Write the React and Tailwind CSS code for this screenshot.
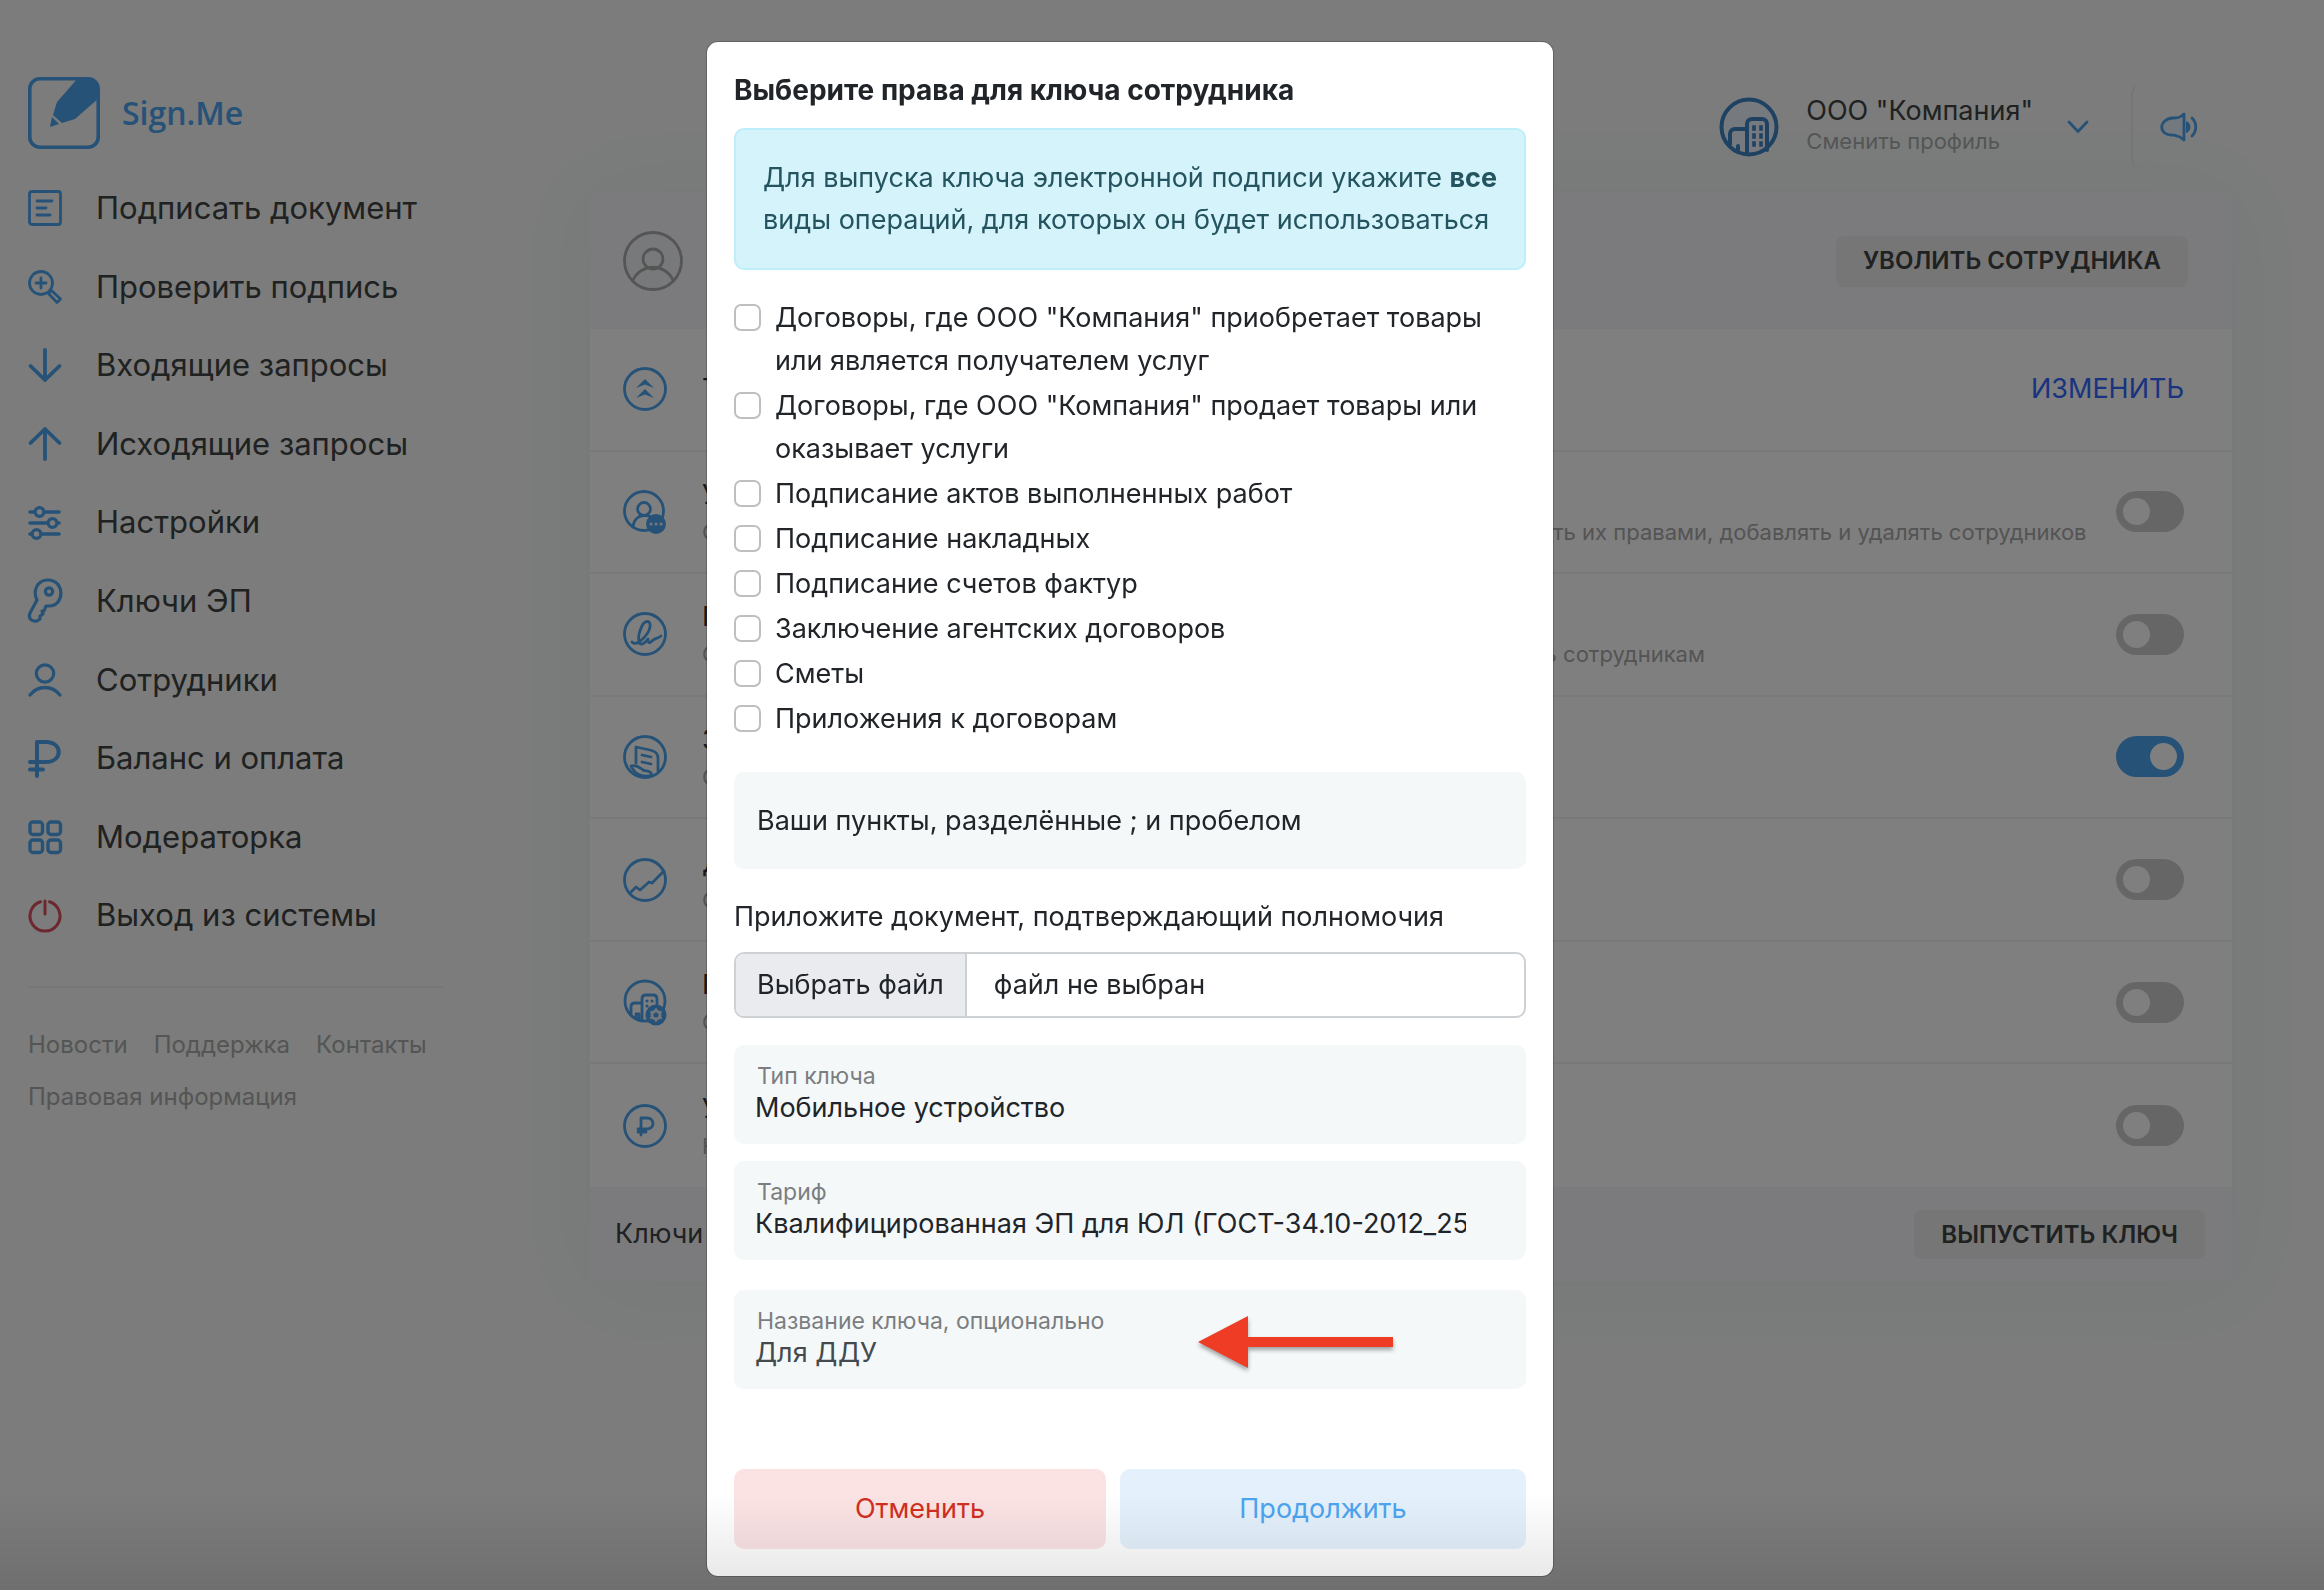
import React, { useState } from 'react';

const stroke = {
  fill: 'none',
  stroke: 'currentColor',
  strokeWidth: 2.8,
  strokeLinecap: 'round',
  strokeLinejoin: 'round',
};

const menuIcons = {
  doc: (
    <>
      <rect x="1.5" y="0.5" width="31" height="33" rx="2.5" />
      <path d="M9 10h15M9 17h9M9 24h13" />
    </>
  ),
  check: (
    <>
      <circle cx="13" cy="13" r="11.5" />
      <path d="M13 8v10M8 13h10" />
      <path d="M20.5 23.5l3-3 9 8.5-3.5 3.5z" />
    </>
  ),
  down: <path strokeWidth="3.8" d="M17 2v30M2.5 18L17 32l14.5-14" />,
  up: <path strokeWidth="3.8" d="M17 32V2M2.5 16L17 2l14.5 14" />,
  settings: (
    <>
      <path strokeWidth="3.6" d="M2 6h5M16 6h15M2 17h17M29 17h2M2 28h2M13 28h18" />
      <circle cx="11.5" cy="6" r="4.4" strokeWidth="3.2" />
      <circle cx="24.5" cy="17" r="4.4" strokeWidth="3.2" />
      <circle cx="8.5" cy="28" r="4.4" strokeWidth="3.2" />
    </>
  ),
  key: (
    <>
      <path strokeWidth="3.2" d="M9 16C4.500 7 9-4 20-4c17 0 17 26 1 26h-3l-2 5h-2l1 3-3 2v3l-3 2c-6 1-9-3-7-8z" />
      <circle cx="21" cy="7.500" r="3.600" strokeWidth="3.2" />
    </>
  ),
  user: (
    <>
      <circle cx="17" cy="10.500" r="8.700" strokeWidth="3.200" />
      <path strokeWidth="3.400" d="M2 32c8-10 22-10 30 0" />
    </>
  ),
  ruble: <path strokeWidth="4" d="M9 35V1h9c17 0 17 20 0 20H2M2 28.500h13" />,
  grid: (
    <>
      <rect x="2" y="2" width="12.500" height="12.500" rx="3" strokeWidth="3.400" />
      <rect x="20" y="2" width="12.500" height="12.500" rx="3" strokeWidth="3.400" />
      <rect x="2" y="20" width="12.500" height="12.500" rx="3" strokeWidth="3.400" />
      <rect x="20" y="20" width="12.500" height="12.500" rx="3" strokeWidth="3.400" />
    </>
  ),
  exit: <path strokeWidth="3" d="M17 2v13M12.500 2.800a15 15 0 1 0 9 0" />,
};

const menu = [
  { icon: 'doc', text: 'Подписать документ' },
  { icon: 'check', text: 'Проверить подпись' },
  { icon: 'down', text: 'Входящие запросы' },
  { icon: 'up', text: 'Исходящие запросы' },
  { icon: 'settings', text: 'Настройки' },
  { icon: 'key', text: 'Ключи ЭП' },
  { icon: 'user', text: 'Сотрудники' },
  { icon: 'ruble', text: 'Баланс и оплата' },
  { icon: 'grid', text: 'Модераторка' },
  { icon: 'exit', text: 'Выход из системы', danger: true },
];

const rowIcons = {
  tariff: (
    <>
      <circle cx="22" cy="22" r="20.500" />
      <path fill="currentColor" stroke="none" d="M13 21l9-9 9 9-9-3.500zM13 31l9-9 9 9-9-3.500z" />
    </>
  ),
  staff: (
    <>
      <circle cx="21" cy="21" r="19.500" />
      <circle cx="21" cy="19" r="6.500" />
      <path d="M10 37c1-14 18-15 22-5" />
      <circle cx="33" cy="34" r="10" fill="currentColor" stroke="none" />
      <path stroke="#e8f1fa" strokeWidth="3" d="M28 34h.1M33 34h.1M38 34h.1" />
    </>
  ),
  sign: (
    <>
      <circle cx="22" cy="22" r="20.500" />
      <path d="M9 30c2 2 4 2 7 0 6-4 12-12 11-18-1-4-6-3-8 2-3 6-4 12-3 16 1 3 5 3 9-3 0 4 1 5 4 2 3-3 5-2 9-5" />
    </>
  ),
  docs: (
    <>
      <circle cx="22" cy="22" r="20.500" />
      <path d="M13 28V12l14 3c5 1 8 3 8 8v13M19 20l9 2M19 27l9 2M8 31c6-2 9 2 12 4s7-1 9 5c-8 3-17 0-21-9z" />
    </>
  ),
  stats: (
    <>
      <circle cx="22" cy="22" r="20.500" />
      <path d="M7 35l6-6 4 3 9-8 3 1 12-12" />
    </>
  ),
  company: (
    <>
      <circle cx="22" cy="21" r="20" />
      <path d="M19 39V19c0-3 2-4 4-4h7c3 0 4 2 4 4v8M8 35V27c0-3 2-4 4-4h7M13 38v-4h3v6" />
      <path strokeWidth="3" d="M24 21h.1M29 21h.1M24 26h.1" />
      <circle cx="33" cy="35" r="10.500" fill="currentColor" stroke="none" />
      <circle cx="33" cy="35" r="4" stroke="#e8f1fa" />
      <path stroke="#e8f1fa" strokeWidth="2" d="M33 29v1M33 40v1M28 32l1 .5M37 37.500l1 .5M38 32l-1 .5M29 37.500l-1 .5" />
    </>
  ),
  money: (
    <>
      <circle cx="22" cy="22" r="20.500" />
      <path d="M18 31V14h6c8 0 8 11 0 11h-9M15 28h8" />
    </>
  ),
};

const permissions = [
  { icon: 'tariff', title: 'Тариф сотрудника', action: 'ИЗМЕНИТЬ' },
  {
    icon: 'staff',
    title: 'Управление сотрудниками',
    note: 'Сотрудник сможет просматривать перечень работников компании, и управлять их правами, добавлять и удалять сотрудников',
  },
  {
    icon: 'sign',
    title: 'Подписание документов',
    note: 'Сотрудник сможет подписывать документы и отправлять запросы на подпись сотрудникам',
  },
  { icon: 'docs', title: 'Запросы на подпись', note: 'Сотрудник сможет видеть запросы', on: true },
  { icon: 'stats', title: 'Доступ к статистике', note: 'Сотрудник сможет видеть статистику' },
  { icon: 'company', title: 'Реквизиты компании', note: 'Сотрудник сможет изменять данные компании' },
  { icon: 'money', title: 'Управление балансом', note: 'Не ограничивать расходы сотрудника' },
];

const operations = [
  'Договоры, где ООО "Компания" приобретает товары или является получателем услуг',
  'Договоры, где ООО "Компания" продает товары или оказывает услуги',
  'Подписание актов выполненных работ',
  'Подписание накладных',
  'Подписание счетов фактур',
  'Заключение агентских договоров',
  'Сметы',
  'Приложения к договорам',
];

const Logo = () => (
  <a href="#" className="flex items-center gap-[22px] text-[#4ca4f0]">
    <svg viewBox="0 0 72 72" className="size-[72px] shrink-0">
      <rect x="1.800" y="1.800" width="68.400" height="68.400" rx="10" fill="none" stroke="currentColor" strokeWidth="3.600" />
      <path fill="currentColor" d="M50 1h11c6 0 10 4 10 10v10L47 42l-13 4-9-8 4-13z" />
      <path fill="currentColor" d="M24 40l7 7-9 3z" />
    </svg>
    <span className="font-['Open_Sans',sans-serif] text-[32px] font-semibold leading-[44px]">Sign.Me</span>
  </a>
);

const Sidebar = () => (
  <aside className="w-[415px] shrink-0 pt-[77px]">
    <Logo />
    <nav className="mt-5 grid h-[786px] auto-rows-fr">
      {menu.map((item) => (
        <a key={item.text} href="#" className="flex items-center gap-[34px] text-[31px] text-[#404242]">
          <svg
            viewBox="0 0 34 34"
            className={item.danger ? 'size-[34px] overflow-visible text-[#d9505c]' : 'size-[34px] overflow-visible text-[#4ca4f0]'}
            {...stroke}
          >
            {menuIcons[item.icon]}
          </svg>
          {item.text}
        </a>
      ))}
    </nav>
    <hr className="mt-[31px] border-t-2 border-[#ebeeec]" />
    <div className="mt-[31px] flex flex-wrap gap-x-[26px] text-[24px] leading-[52px] text-[#a9aba9]">
      <a href="#">Новости</a>
      <a href="#">Поддержка</a>
      <a href="#">Контакты</a>
      <a href="#">Правовая информация</a>
    </div>
  </aside>
);

const Header = () => (
  <header className="flex h-[170px] items-end justify-end pr-[35px]">
    <button type="button" className="flex h-[87px] items-center text-left">
      <svg viewBox="0 0 60 60" className="size-[60px] text-[#3f83c4]" {...stroke} strokeWidth="4">
        <circle cx="30" cy="30" r="27.500" fill="#edf2fc" />
        <path d="M28 55V27c0-3 2-5 5-5h10c3 0 5 2 5 5v26M11 47V37c0-3 2-5 5-5h12M19 54v-5" />
        <path strokeDasharray="2 6" strokeWidth="3.600" strokeLinecap="square" d="M35 30v22M42 30v22" />
      </svg>
      <span className="ml-[27px] flex flex-col pb-1">
        <span className="text-[27px] leading-[32px] text-[#404242]">ООО "Компания"</span>
        <span className="text-[22px] leading-[28px] text-[#a9abac]">Сменить профиль</span>
      </span>
      <svg viewBox="0 0 20 12" className="ml-[35px] h-3 w-5 overflow-visible text-[#4ca4f0]" {...stroke}>
        <path d="M1 1l9 9.500L19 1" />
      </svg>
    </button>
    <div className="ml-[43px] h-[87px] w-4 rounded-l-[12px] border-l-2 border-[#eaecee]" />
    <button type="button" aria-label="Уведомления" className="ml-[13px] flex h-[87px] items-center">
      <svg viewBox="0 0 37 30" className="h-[30px] w-[37px] overflow-visible text-[#4ca4f0]" {...stroke}>
        <path d="M24 2v26c-4-4-7-4-11-5-15 1-15-16 0-17 4 0 7 0 11-4z" fill="#e6f2fc" />
        <path fill="currentColor" stroke="none" d="M26 9c6 2 6 10 0 12z" />
        <path d="M32 6c5 5 5 13 0 18" />
      </svg>
    </button>
  </header>
);

const Toggle = ({ label, on }) => (
  <input
    type="checkbox"
    role="switch"
    aria-label={label}
    defaultChecked={on}
    className="h-[41px] w-[68px] shrink-0 appearance-none rounded-full bg-[#cccccc] px-[7px] py-[7px] before:block before:size-[27px] before:rounded-full before:bg-white before:content-[''] checked:bg-[#4ca4f0] checked:before:ml-[27px]"
  />
);

const PermissionRow = ({ item }) => (
  <li className="flex h-full items-center border-b-2 border-[#f3f3f3] pl-[33px] pr-[48px] last:border-0">
    <svg viewBox="0 0 44 44" className="size-[44px] shrink-0 overflow-visible text-[#4ca4f0]" {...stroke}>
      {rowIcons[item.icon]}
    </svg>
    <div className="ml-[35px] flex min-w-0 flex-1 flex-col whitespace-nowrap">
      <span className="text-[27px] leading-[40px] text-[#333]">{item.title}</span>
      {item.note && <span className="text-[22px] leading-[34px] text-[#a8a8a8]">{item.note}</span>}
    </div>
    {item.action ? (
      <a href="#" className="text-[27px] text-[#3366ff]">
        {item.action}
      </a>
    ) : (
      <Toggle label={item.title} on={item.on} />
    )}
  </li>
);

const EmployeeCard = () => (
  <section className="mt-[23px] bg-white shadow-[0_0_80px_rgba(60,70,130,0.05)]">
    <div className="flex h-[136px] items-center justify-between bg-[#f6f6fa] pl-[33px] pr-[44px]">
      <svg viewBox="0 0 60 60" className="size-[60px] text-[#aaaaaa]" {...stroke}>
        <circle cx="30" cy="30" r="28.500" fill="#f1f3f6" />
        <circle cx="30" cy="28" r="10" />
        <path d="M10 49c8-17 32-17 40 0" />
      </svg>
      <button type="button" className="h-[51px] rounded-[8px] bg-[#ececec] px-[27px] text-[24px] font-semibold text-[#404242]">
        УВОЛИТЬ СОТРУДНИКА
      </button>
    </div>
    <ul className="grid h-[858px] auto-rows-fr grid-cols-1">
      {permissions.map((item) => (
        <PermissionRow key={item.title} item={item} />
      ))}
    </ul>
    <div className="flex h-[95px] items-center justify-between bg-[#f6f6fa] pl-[25px] pr-[27px]">
      <span className="text-[27px] text-[#404242]">Ключи</span>
      <button type="button" className="h-[49px] rounded-[8px] bg-[#ececec] px-[27px] text-[24px] font-semibold text-[#404242]">
        ВЫПУСТИТЬ КЛЮЧ
      </button>
    </div>
  </section>
);

const fieldBox = 'flex h-[99px] flex-col rounded-[10px] bg-[#f4f8f9] px-[21px] pt-[17px]';
const fieldLabel = 'pl-[2px] text-[23px] leading-[28px] text-[#7b7e80]';

const SelectField = ({ id, label, value }) => (
  <div className={fieldBox}>
    <label htmlFor={id} className={fieldLabel}>
      {label}
    </label>
    <select id={id} className="mr-[39px] h-[36px] appearance-none overflow-hidden bg-transparent text-[27px] leading-[36px] text-[#212529]">
      <option>{value}</option>
    </select>
  </div>
);

const KeyRightsModal = () => {
  const [keyName, setKeyName] = useState('Для ДДУ');

  return (
    <div className="fixed inset-0 flex items-start justify-center overflow-hidden bg-black/50 pr-[64px] pt-[41px]">
      <form
        role="dialog"
        aria-labelledby="modal-title"
        className="w-[848px] rounded-[12px] border border-black/20 bg-white bg-clip-padding px-[27px] pb-[27px] pt-[27px] text-[27px] leading-[42px] text-[#212529]"
      >
        <h1 id="modal-title" className="text-[28px] font-bold">
          Выберите права для ключа сотрудника
        </h1>

        <div className="mt-[17px] rounded-[10px] border-2 border-[#bdeefa] bg-[#d5f3fb] py-[27px] pl-[27px] pr-3 text-[#23545f]">
          Для выпуска ключа электронной подписи укажите <b>все</b> виды операций, для которых он будет использоваться
        </div>

        <div className="mt-[26px] flex flex-col gap-[2px] leading-[43px]">
          {operations.map((text) => (
            <label key={text} className="flex items-start gap-[14px]">
              <input
                type="checkbox"
                className="mt-2 size-[27px] shrink-0 appearance-none rounded-[7px] border-2 border-[#bfbfbf] bg-white checked:border-[#4ca4f0] checked:bg-[#4ca4f0]"
              />
              <span>{text}</span>
            </label>
          ))}
        </div>

        <input
          type="text"
          aria-label="Ваши пункты"
          placeholder="Ваши пункты, разделённые ; и пробелом"
          className="mt-[32px] block h-[97px] w-full rounded-[10px] bg-[#f4f8f9] px-[23px] placeholder:text-[#212529]"
        />

        <label htmlFor="authority-file" className="mt-[27px] block">
          Приложите документ, подтверждающий полномочия
        </label>
        <label className="mt-[14px] flex h-[66px] items-center overflow-hidden rounded-[10px] border-2 border-[#ced1d4]">
          <input id="authority-file" type="file" className="sr-only" />
          <span className="flex h-full items-center border-r-2 border-[#ced1d4] bg-[#e9ebef] px-[21px]">Выбрать файл</span>
          <span className="pl-[27px]">файл не выбран</span>
        </label>

        <div className="mt-[27px] flex flex-col gap-[17px]">
          <SelectField id="key-type" label="Тип ключа" value="Мобильное устройство" />
          <SelectField id="tariff" label="Тариф" value="Квалифицированная ЭП для ЮЛ (ГОСТ-34.10-2012_256)" />
        </div>

        <div className="relative mt-[30px]">
          <div className={fieldBox}>
            <label htmlFor="key-name" className={fieldLabel}>
              Название ключа, опционально
            </label>
            <input
              id="key-name"
              type="text"
              value={keyName}
              onChange={(e) => setKeyName(e.target.value)}
              className="h-[36px] bg-transparent leading-[36px] text-[#444a4d]"
            />
          </div>
          <svg viewBox="0 0 196 52" className="absolute left-[464px] top-[26px] h-[52px] w-[196px] overflow-visible drop-shadow-[0_3px_2px_rgba(0,0,0,0.35)]">
            <path fill="#ee3d24" d="M0 26L50 0v21h145v10H50v21z" />
          </svg>
        </div>

        <div className="mt-[80px] flex gap-[14px] leading-[80px]">
          <button type="button" className="w-[372px] rounded-[10px] bg-[#fbe3e4] text-[#d02f21]">
            Отменить
          </button>
          <button type="button" className="flex-1 rounded-[10px] bg-[#e4f1fc] text-[#4ca4f0]">
            Продолжить
          </button>
        </div>
      </form>
      <div className="pointer-events-none absolute inset-x-0 bottom-0 h-24 bg-linear-to-b from-transparent to-black/10" />
    </div>
  );
};

export default function App() {
  return (
    <div className="min-h-screen bg-[#f6f9f7] font-['Inter','Liberation_Sans',sans-serif]">
      <div className="flex pl-7">
        <Sidebar />
        <main className="ml-[147px] mr-[92px] min-w-0 flex-1">
          <Header />
          <EmployeeCard />
        </main>
      </div>
      <KeyRightsModal />
    </div>
  );
}
